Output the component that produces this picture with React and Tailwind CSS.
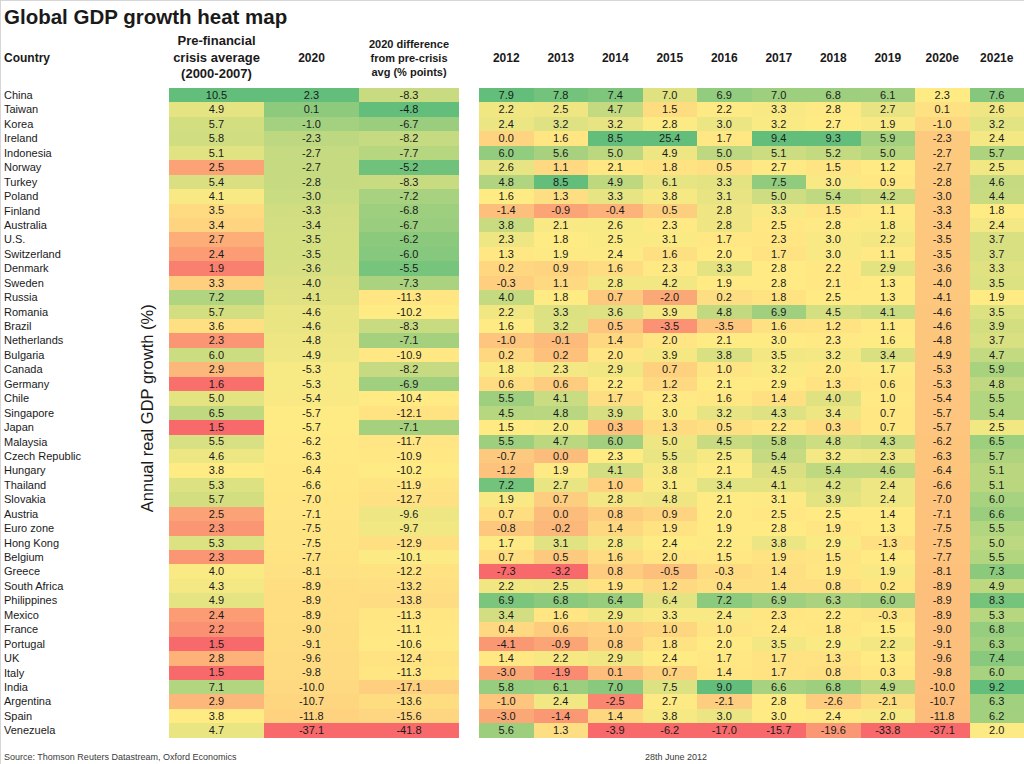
import React from "react";

const RED = [248, 105, 107];
const YEL = [255, 235, 132];
const GRN = [99, 190, 123];

const years = ["2012", "2013", "2014", "2015", "2016", "2017", "2018", "2019", "2020e", "2021e"];

// name, pre-crisis avg, 2020, diff, then 2012..2021e
const data = [
  ["China", 10.5, 2.3, -8.3, 7.9, 7.8, 7.4, 7.0, 6.9, 7.0, 6.8, 6.1, 2.3, 7.6],
  ["Taiwan", 4.9, 0.1, -4.8, 2.2, 2.5, 4.7, 1.5, 2.2, 3.3, 2.8, 2.7, 0.1, 2.6],
  ["Korea", 5.7, -1.0, -6.7, 2.4, 3.2, 3.2, 2.8, 3.0, 3.2, 2.7, 1.9, -1.0, 3.2],
  ["Ireland", 5.8, -2.3, -8.2, 0.0, 1.6, 8.5, 25.4, 1.7, 9.4, 9.3, 5.9, -2.3, 2.4],
  ["Indonesia", 5.1, -2.7, -7.7, 6.0, 5.6, 5.0, 4.9, 5.0, 5.1, 5.2, 5.0, -2.7, 5.7],
  ["Norway", 2.5, -2.7, -5.2, 2.6, 1.1, 2.1, 1.8, 0.5, 2.7, 1.5, 1.2, -2.7, 2.5],
  ["Turkey", 5.4, -2.8, -8.3, 4.8, 8.5, 4.9, 6.1, 3.3, 7.5, 3.0, 0.9, -2.8, 4.6],
  ["Poland", 4.1, -3.0, -7.2, 1.6, 1.3, 3.3, 3.8, 3.1, 5.0, 5.4, 4.2, -3.0, 4.4],
  ["Finland", 3.5, -3.3, -6.8, -1.4, -0.9, -0.4, 0.5, 2.8, 3.3, 1.5, 1.1, -3.3, 1.8],
  ["Australia", 3.4, -3.4, -6.7, 3.8, 2.1, 2.6, 2.3, 2.8, 2.5, 2.8, 1.8, -3.4, 2.4],
  ["U.S.", 2.7, -3.5, -6.2, 2.3, 1.8, 2.5, 3.1, 1.7, 2.3, 3.0, 2.2, -3.5, 3.7],
  ["Switzerland", 2.4, -3.5, -6.0, 1.3, 1.9, 2.4, 1.6, 2.0, 1.7, 3.0, 1.1, -3.5, 3.7],
  ["Denmark", 1.9, -3.6, -5.5, 0.2, 0.9, 1.6, 2.3, 3.3, 2.8, 2.2, 2.9, -3.6, 3.3],
  ["Sweden", 3.3, -4.0, -7.3, -0.3, 1.1, 2.8, 4.2, 1.9, 2.8, 2.1, 1.3, -4.0, 3.5],
  ["Russia", 7.2, -4.1, -11.3, 4.0, 1.8, 0.7, -2.0, 0.2, 1.8, 2.5, 1.3, -4.1, 1.9],
  ["Romania", 5.7, -4.6, -10.2, 2.2, 3.3, 3.6, 3.9, 4.8, 6.9, 4.5, 4.1, -4.6, 3.5],
  ["Brazil", 3.6, -4.6, -8.3, 1.6, 3.2, 0.5, -3.5, -3.5, 1.6, 1.2, 1.1, -4.6, 3.9],
  ["Netherlands", 2.3, -4.8, -7.1, -1.0, -0.1, 1.4, 2.0, 2.1, 3.0, 2.3, 1.6, -4.8, 3.7],
  ["Bulgaria", 6.0, -4.9, -10.9, 0.2, 0.2, 2.0, 3.9, 3.8, 3.5, 3.2, 3.4, -4.9, 4.7],
  ["Canada", 2.9, -5.3, -8.2, 1.8, 2.3, 2.9, 0.7, 1.0, 3.2, 2.0, 1.7, -5.3, 5.9],
  ["Germany", 1.6, -5.3, -6.9, 0.6, 0.6, 2.2, 1.2, 2.1, 2.9, 1.3, 0.6, -5.3, 4.8],
  ["Chile", 5.0, -5.4, -10.4, 5.5, 4.1, 1.7, 2.3, 1.6, 1.4, 4.0, 1.0, -5.4, 5.5],
  ["Singapore", 6.5, -5.7, -12.1, 4.5, 4.8, 3.9, 3.0, 3.2, 4.3, 3.4, 0.7, -5.7, 5.4],
  ["Japan", 1.5, -5.7, -7.1, 1.5, 2.0, 0.3, 1.3, 0.5, 2.2, 0.3, 0.7, -5.7, 2.5],
  ["Malaysia", 5.5, -6.2, -11.7, 5.5, 4.7, 6.0, 5.0, 4.5, 5.8, 4.8, 4.3, -6.2, 6.5],
  ["Czech Republic", 4.6, -6.3, -10.9, -0.7, 0.0, 2.3, 5.5, 2.5, 5.4, 3.2, 2.3, -6.3, 5.7],
  ["Hungary", 3.8, -6.4, -10.2, -1.2, 1.9, 4.1, 3.8, 2.1, 4.5, 5.4, 4.6, -6.4, 5.1],
  ["Thailand", 5.3, -6.6, -11.9, 7.2, 2.7, 1.0, 3.1, 3.4, 4.1, 4.2, 2.4, -6.6, 5.1],
  ["Slovakia", 5.7, -7.0, -12.7, 1.9, 0.7, 2.8, 4.8, 2.1, 3.1, 3.9, 2.4, -7.0, 6.0],
  ["Austria", 2.5, -7.1, -9.6, 0.7, 0.0, 0.8, 0.9, 2.0, 2.5, 2.5, 1.4, -7.1, 6.6],
  ["Euro zone", 2.3, -7.5, -9.7, -0.8, -0.2, 1.4, 1.9, 1.9, 2.8, 1.9, 1.3, -7.5, 5.5],
  ["Hong Kong", 5.3, -7.5, -12.9, 1.7, 3.1, 2.8, 2.4, 2.2, 3.8, 2.9, -1.3, -7.5, 5.0],
  ["Belgium", 2.3, -7.7, -10.1, 0.7, 0.5, 1.6, 2.0, 1.5, 1.9, 1.5, 1.4, -7.7, 5.5],
  ["Greece", 4.0, -8.1, -12.2, -7.3, -3.2, 0.8, -0.5, -0.3, 1.4, 1.9, 1.9, -8.1, 7.3],
  ["South Africa", 4.3, -8.9, -13.2, 2.2, 2.5, 1.9, 1.2, 0.4, 1.4, 0.8, 0.2, -8.9, 4.9],
  ["Philippines", 4.9, -8.9, -13.8, 6.9, 6.8, 6.4, 6.4, 7.2, 6.9, 6.3, 6.0, -8.9, 8.3],
  ["Mexico", 2.4, -8.9, -11.3, 3.4, 1.6, 2.9, 3.3, 2.4, 2.3, 2.2, -0.3, -8.9, 5.3],
  ["France", 2.2, -9.0, -11.1, 0.4, 0.6, 1.0, 1.0, 1.0, 2.4, 1.8, 1.5, -9.0, 6.8],
  ["Portugal", 1.5, -9.1, -10.6, -4.1, -0.9, 0.8, 1.8, 2.0, 3.5, 2.9, 2.2, -9.1, 6.3],
  ["UK", 2.8, -9.6, -12.4, 1.4, 2.2, 2.9, 2.4, 1.7, 1.7, 1.3, 1.3, -9.6, 7.4],
  ["Italy", 1.5, -9.8, -11.3, -3.0, -1.9, 0.1, 0.7, 1.4, 1.7, 0.8, 0.3, -9.8, 6.0],
  ["India", 7.1, -10.0, -17.1, 5.8, 6.1, 7.0, 7.5, 9.0, 6.6, 6.8, 4.9, -10.0, 9.2],
  ["Argentina", 2.9, -10.7, -13.6, -1.0, 2.4, -2.5, 2.7, -2.1, 2.8, -2.6, -2.1, -10.7, 6.3],
  ["Spain", 3.8, -11.8, -15.6, -3.0, -1.4, 1.4, 3.8, 3.0, 3.0, 2.4, 2.0, -11.8, 6.2],
  ["Venezuela", 4.7, -37.1, -41.8, 5.6, 1.3, -3.9, -6.2, -17.0, -15.7, -19.6, -33.8, -37.1, 2.0],
];

const mix = (a, b, t) => {
  const k = Math.max(0, Math.min(1, t));
  return `rgb(${a.map((c, i) => Math.round(c + (b[i] - c) * k)).join(",")})`;
};

const median = (arr) => {
  const s = [...arr].sort((a, b) => a - b);
  const pos = (s.length - 1) / 2;
  const lo = Math.floor(pos);
  return s[lo] + (s[Math.ceil(pos)] - s[lo]) * (pos - lo);
};

// excel style 3-colour scale: min red, median yellow, max green
const makeScale = (values, maxOverride) => {
  const min = Math.min(...values);
  const max = maxOverride ?? Math.max(...values);
  const mid = median(values);
  return (v) =>
    v <= mid ? mix(RED, YEL, (v - min) / (mid - min)) : mix(YEL, GRN, (v - mid) / (max - mid));
};

// 2020e column is shaded differently, read off the picture
const pts2020e = [
  [-37.1, 0],
  [-11.8, 0.64],
  [-2.3, 0.74],
  [-1.0, 0.85],
  [0.1, 0.92],
  [2.3, 1],
];
const scale2020e = (v) => {
  for (let i = 1; i < pts2020e.length; i++) {
    const [x0, t0] = pts2020e[i - 1];
    const [x1, t1] = pts2020e[i];
    if (v <= x1) return mix(RED, YEL, t0 + ((v - x0) / (x1 - x0)) * (t1 - t0));
  }
  return mix(RED, YEL, 1);
};

const col = (i) => data.map((r) => r[i]);
const scales = [1, 2, 3, 4, 5, 6, 7, 8, 9, 10, 11].map((i) => makeScale(col(i), i === 11 ? 9 : undefined));
const scale2021e = makeScale([...col(12), ...col(13)]);

const colorFor = (rowIdx, i, v) => {
  if (data[rowIdx][0] === "Venezuela" && i === 10) return mix(RED, YEL, 0.35);
  if (i === 12) return scale2020e(v);
  if (i === 13) return scale2021e(v);
  return scales[i - 1](v);
};

const leftWidths = ["w-[95px]", "w-[95px]", "w-[100px]"];

function Cell({ v, bg, w }) {
  return (
    <div style={{ background: bg }} className={`${w} shrink-0 flex items-center justify-center`}>
      {v.toFixed(1)}
    </div>
  );
}

export default function App() {
  return (
    <div className="w-[1024px] h-[764px] overflow-hidden bg-white border-t border-l border-[#d6d6d6] font-['Liberation_Sans',Arial,sans-serif] text-[#1a1a1a]">
      <div className="h-[33px] flex items-center pl-[3px] text-[20.5px] font-bold leading-none">
        Global GDP growth heat map
      </div>

      <div className="h-[54px] flex items-center pb-[6px] font-bold text-[12px] leading-[14px]">
        <div className="w-[168px] shrink-0 pl-[3px]">Country</div>
        <div className="w-[95px] shrink-0 text-center text-[13px] leading-[16.5px]">
          Pre-financial
          <br />
          crisis average
          <br />
          (2000-2007)
        </div>
        <div className="w-[95px] shrink-0 text-center">2020</div>
        <div className="w-[100px] shrink-0 text-center text-[11px] leading-[14px]">
          2020 difference
          <br />
          from pre-crisis
          <br />
          avg (% points)
        </div>
        <div className="w-[20px] shrink-0" />
        {years.map((y) => (
          <div key={y} className="w-[54.5px] shrink-0 text-center">
            {y}
          </div>
        ))}
      </div>

      <div className="flex">
        <div className="w-[128px] shrink-0 flex flex-col">
          {data.map((r) => (
            <div key={r[0]} className="h-[14.444px] pl-[3px] text-[11px] leading-[14.444px] whitespace-nowrap">
              {r[0]}
            </div>
          ))}
        </div>
        <div className="w-[40px] shrink-0 flex items-center justify-center pr-[5px] pb-[10px]">
          <div className="-rotate-90 whitespace-nowrap text-[16.5px] leading-none">Annual real GDP growth (%)</div>
        </div>
        <div className="flex flex-col text-[11px]">
          {data.map((r, ri) => (
            <div key={r[0]} className="flex h-[14.444px]">
              {[1, 2, 3].map((i, k) => (
                <Cell key={i} v={r[i]} bg={colorFor(ri, i, r[i])} w={leftWidths[k]} />
              ))}
              <div className="w-[20px] shrink-0" />
              {[4, 5, 6, 7, 8, 9, 10, 11, 12, 13].map((i) => (
                <Cell key={i} v={r[i]} bg={colorFor(ri, i, r[i])} w="w-[54.5px]" />
              ))}
            </div>
          ))}
        </div>
      </div>

      <div className="h-[26px] flex pt-[13px] text-[9px] leading-[12px] text-[#3a3a3a]">
        <div className="w-[644px] shrink-0 pl-[3px]">Source: Thomson Reuters Datastream, Oxford Economics</div>
        <div>28th June 2012</div>
      </div>
    </div>
  );
}
